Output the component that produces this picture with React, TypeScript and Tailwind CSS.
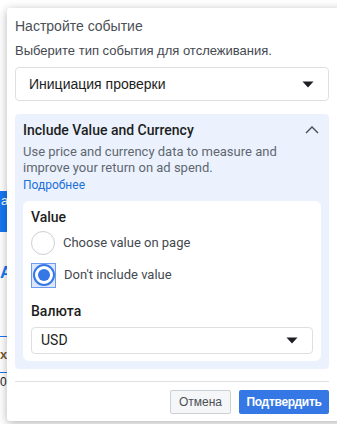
import { useState } from 'react'

function Caret() {
  return (
    <svg width="12" height="7" viewBox="0 0 12 7" className="shrink-0">
      <path d="M0.5 0.5 H11.5 L6 6.5 Z" fill="#1c1e21" />
    </svg>
  )
}

function Radio({ checked, label, focused }: { checked: boolean; label: string; focused?: boolean }) {
  return (
    <div className="flex items-center h-[24px] gap-[8px]">
      <div
        className={
          focused
            ? 'w-[25px] h-[25px] flex items-center justify-center border border-[#6b9cf0] bg-[#dbe7fc]'
            : 'w-[24px] h-[24px] flex items-center justify-center'
        }
      >
        <div
          className={
            checked
              ? 'w-[22px] h-[22px] rounded-full border-2 border-[#3578e5] bg-white flex items-center justify-center'
              : 'w-[24px] h-[24px] rounded-full border border-[#ccd0d5] bg-white'
          }
        >
          {checked && <div className="w-[12px] h-[12px] rounded-full bg-[#3578e5]" />}
        </div>
      </div>
      <span className="text-[13px] text-[#444950]">{label}</span>
    </div>
  )
}

export default function App() {
  const [value, setValue] = useState('none')

  return (
    <div className="relative w-[337px] h-[424px] bg-white overflow-hidden font-['Liberation_Sans',Arial,sans-serif]">
      {/* page behind the dialog */}
      <div className="absolute left-0 top-[191px] w-[10px] h-[41px] bg-[#1877f2] text-white text-[13px] leading-[20px] pl-[1px]">a</div>
      <div className="absolute left-0 top-[263px] text-[#1877f2] text-[17px] font-bold leading-[20px]">Al</div>
      <div className="absolute left-0 top-[336px] w-[10px] h-px bg-[#1877f2]" />
      <div className="absolute left-0 top-[347px] text-[#7a5a2e] text-[13px] font-bold leading-[16px]">x</div>
      <div className="absolute left-0 top-[372px] w-[10px] h-px bg-[#1877f2]" />
      <div className="absolute left-0 top-[374px] text-[#1c1e21] text-[12px] leading-[16px]">0</div>

      {/* dialog */}
      <div
        onClick={() => setValue(value)}
        className="absolute left-[7px] top-[8px] w-[340px] h-[413px] bg-white rounded-[3px] shadow-[0_2px_10px_rgba(0,0,0,0.3)] pl-[8px] pr-[18px] pt-[9px]"
      >
        <div className="text-[14px] leading-[18px] text-[#4b4f56]">Настройте событие</div>
        <div className="mt-[8px] text-[13px] leading-[16px] text-[#444950]">Выберите тип события для отслеживания.</div>
        <div className="mt-[8px] h-[34px] border border-[#dddfe2] rounded-[4px] flex items-center justify-between pl-[13px] pr-[14px]">
          <span className="text-[14px] text-[#1c1e21]">Инициация проверки</span>
          <Caret />
        </div>

        <div className="mt-[13px] h-[255px] bg-[#ebf2fd] rounded-[4px] px-[8px] pt-[8px] font-['Roboto',sans-serif]">
          <div className="flex items-center justify-between h-[16px]">
            <span className="text-[14px] font-medium text-[#1c1e21]">Include Value and Currency</span>
            <svg width="14" height="8" viewBox="0 0 14 8" className="mr-[2px]">
              <path d="M1 7 L7 1 L13 7" fill="none" stroke="#444950" strokeWidth="1.4" />
            </svg>
          </div>
          <p className="mt-[6px] text-[13px] leading-[16px] text-[#606770]">
            Use price and currency data to measure and improve your return on ad spend.
          </p>
          <a className="block mt-[1px] text-[12px] leading-[16px] text-[#216fdb]">Подробнее</a>

          <div className="mt-[8px] h-[160px] bg-white rounded-[6px] px-[8px] pt-[8px]">
            <div className="text-[14px] font-medium leading-[16px] text-[#1c1e21]">Value</div>
            <div className="mt-[6px] flex flex-col gap-[8px]">
              <Radio checked={false} label="Choose value on page" />
              <Radio checked label="Don't include value" focused />
            </div>
            <div className="mt-[16px] text-[14px] font-medium leading-[16px] text-[#1c1e21]">Валюта</div>
            <div className="mt-[8px] h-[27px] border border-[#dddfe2] rounded-[4px] flex items-center justify-between pl-[9px] pr-[14px]">
              <span className="text-[14px] text-[#1c1e21]">USD</span>
              <Caret />
            </div>
          </div>
        </div>

        <div className="mt-[12px] h-px bg-[#dddfe2]" />
        <div className="mt-[8px] flex justify-end gap-[8px]">
          <button className="h-[24px] w-[61px] rounded-[2px] border border-[#ccd0d5] bg-[#f5f6f7] text-[12px] text-[#4b4f56]">
            Отмена
          </button>
          <button className="h-[24px] w-[90px] rounded-[2px] bg-[#3578e5] text-[12px] font-bold tracking-[-0.3px] text-white">
            Подтвердить
          </button>
        </div>
      </div>
    </div>
  )
}
